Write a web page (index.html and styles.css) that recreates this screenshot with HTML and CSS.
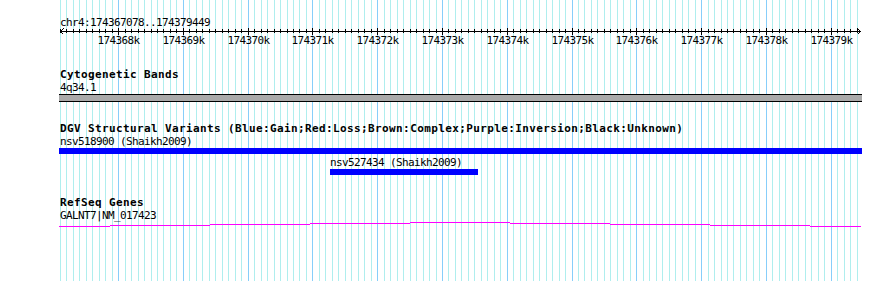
FILE: index.html
```html
<!DOCTYPE html>
<html lang="en">

<head>
    <title>chr4:174367078..174379449</title>
    <meta name="description" content="Genome browser tracks for a region of chromosome 4.">
    <link rel="stylesheet" href="styles.css">
</head>

<body>
    <div class="browser">
        <svg class="grid" id="grid" width="890" height="281"></svg>

        <div class="tracks">
            <section class="ruler">
                <div class="ruler-title">chr4:174367078..174379449</div>
                <svg class="ruler-scale" width="890" height="20">
                    <path class="ruler-axis" d="M60 3.5 H861 M63.5 0.5 L60.5 3.5 L63.5 6.5 M857.5 0.5 L860.5 3.5 L857.5 6.5"></path>
                    <g id="ticks"></g>
                    <g class="ruler-labels">
                        <text x="118.5" y="16">174368k</text>
                        <text x="183.5" y="16">174369k</text>
                        <text x="248.5" y="16">174370k</text>
                        <text x="312.5" y="16">174371k</text>
                        <text x="377.5" y="16">174372k</text>
                        <text x="442.5" y="16">174373k</text>
                        <text x="507.5" y="16">174374k</text>
                        <text x="572.5" y="16">174375k</text>
                        <text x="636.5" y="16">174376k</text>
                        <text x="701.5" y="16">174377k</text>
                        <text x="766.5" y="16">174378k</text>
                        <text x="831.5" y="16">174379k</text>
                    </g>
                </svg>
            </section>

            <section class="track track-cyto">
                <div class="track-title">Cytogenetic Bands</div>
                <div class="feature" style="margin-left: 59px; width: 803px;">
                    <div class="feature-label">4q34.1</div>
                    <div class="band"></div>
                </div>
            </section>

            <section class="track track-dgv">
                <div class="track-title">DGV Structural Variants (Blue:Gain;Red:Loss;Brown:Complex;Purple:Inversion;Black:Unknown)</div>
                <div class="feature" style="margin-left: 59px; width: 803px;">
                    <div class="feature-label">nsv518900 (Shaikh2009)</div>
                    <div class="variant gain"></div>
                </div>
                <div class="feature feature-stacked" style="margin-left: 330px; width: 148px;">
                    <div class="feature-label">nsv527434 (Shaikh2009)</div>
                    <div class="variant gain"></div>
                </div>
            </section>

            <section class="track track-genes">
                <div class="track-title">RefSeq Genes</div>
                <div class="feature" style="margin-left: 59px; width: 803px;">
                    <div class="feature-label">GALNT7|NM_017423</div>
                </div>
                <svg class="gene-model" width="890" height="8">
                    <path d="M59 5.5 H110 M110 4.5 H210 M210 3.5 H310 M310 2.5 H410 M410 1.5 H510 M510 2.5 H610 M610 3.5 H710 M710 4.5 H810 M810 5.5 H861"></path>
                </svg>
            </section>
        </div>
    </div>

    <script src="script.js"></script>
</body>

</html>
```

FILE: styles.css
```css
body {
    margin: 0;
    background-color: #ffffff;
}

.browser {
    position: relative;
    width: 890px;
    height: 281px;
    overflow: hidden;
    font-family: "DejaVu Sans Mono", "Liberation Mono", monospace;
    font-size: 11px;
    color: #000000;
}

.grid {
    position: absolute;
    top: 0;
    left: 0;
    shape-rendering: crispEdges;
}

.grid-minor {
    stroke: #afeeee;
    stroke-width: 1;
}

.grid-major {
    stroke: #87cefa;
    stroke-width: 1;
}

.tracks {
    position: relative;
}

/* ruler */

.ruler {
    padding-top: 17px;
}

.ruler-title,
.feature-label {
    line-height: 11px;
    letter-spacing: -0.62px;
    white-space: nowrap;
}

.ruler-title {
    padding-left: 60px;
}

.ruler-scale {
    display: block;
    shape-rendering: crispEdges;
}

.ruler-axis {
    fill: none;
    stroke: #000000;
    stroke-width: 1;
}

.ruler-tick {
    stroke: #000000;
    stroke-width: 1;
}

.ruler-labels text {
    font-family: "DejaVu Sans Mono", "Liberation Mono", monospace;
    font-size: 11px;
    letter-spacing: -0.62px;
    text-anchor: middle;
    fill: #000000;
}

/* tracks */

.track-title {
    padding-left: 60px;
    font-weight: bold;
    line-height: 12px;
    letter-spacing: 0.38px;
    white-space: nowrap;
}

.track-cyto {
    margin-top: 21px;
}

.track-dgv {
    margin-top: 21px;
}

.track-genes {
    margin-top: 22px;
}

.track-title + .feature {
    margin-top: 1px;
}

.feature-label {
    padding-left: 1px;
}

.feature-stacked {
    margin-top: 3px;
}

.feature-stacked .feature-label {
    padding-left: 0;
}

.band {
    height: 6px;
    margin-top: 1px;
    background-color: #aaaaaa;
    border-top: 1px solid #000000;
    border-bottom: 1px solid #000000;
}

.variant {
    height: 6px;
    margin-top: 1px;
}

.gain {
    background-color: #0000ff;
}

.gene-model {
    display: block;
    shape-rendering: crispEdges;
}

.gene-model path {
    fill: none;
    stroke: #ff00ff;
    stroke-width: 1;
}
```

FILE: script.js
```js
// region shown and its pixel scale
const START = 174367078;
const END = 174379449;
const LEFT = 58.4;
const SCALE = 712.5 / 11000;
const HEIGHT = 281;
const SVG_NS = 'http://www.w3.org/2000/svg';

function toX(bp) {
    return Math.round(LEFT + (bp - START) * SCALE) + 0.5;
}

function addLine(parent, x, y1, y2, className) {
    const line = document.createElementNS(SVG_NS, 'line');
    line.setAttribute('x1', x);
    line.setAttribute('x2', x);
    line.setAttribute('y1', y1);
    line.setAttribute('y2', y2);
    line.setAttribute('class', className);
    parent.appendChild(line);
}

const grid = document.getElementById('grid');
const ticks = document.getElementById('ticks');

for (let bp = Math.ceil(START / 100) * 100; bp <= END; bp += 100) {
    const x = toX(bp);
    const major = bp % 1000 === 0;

    addLine(grid, x, 0, HEIGHT, major ? 'grid-major' : 'grid-minor');
    addLine(ticks, x, major ? 0 : 1, major ? 7 : 5, 'ruler-tick');
}
```
